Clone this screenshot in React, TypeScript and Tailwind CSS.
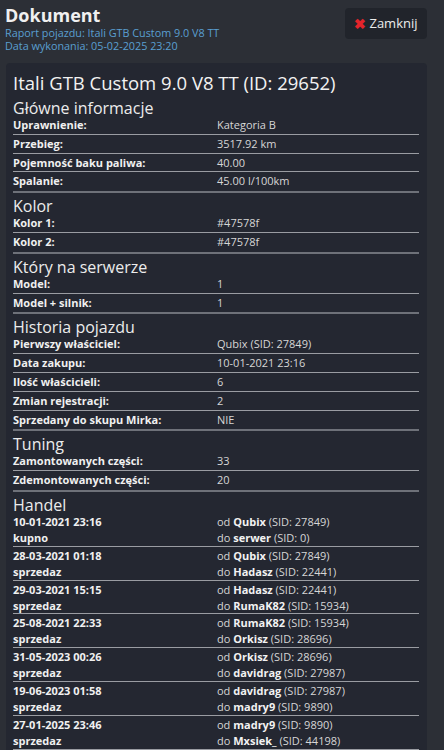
import React from "react";

type Row = [string, string];

const sections: { title: string; rows: Row[] }[] = [
  {
    title: "Główne informacje",
    rows: [
      ["Uprawnienie:", "Kategoria B"],
      ["Przebieg:", "3517.92 km"],
      ["Pojemność baku paliwa:", "40.00"],
      ["Spalanie:", "45.00 l/100km"],
    ],
  },
  {
    title: "Kolor",
    rows: [
      ["Kolor 1:", "#47578f"],
      ["Kolor 2:", "#47578f"],
    ],
  },
  {
    title: "Który na serwerze",
    rows: [
      ["Model:", "1"],
      ["Model + silnik:", "1"],
    ],
  },
  {
    title: "Historia pojazdu",
    rows: [
      ["Pierwszy właściciel:", "Qubix (SID: 27849)"],
      ["Data zakupu:", "10-01-2021 23:16"],
      ["Ilość właścicieli:", "6"],
      ["Zmian rejestracji:", "2"],
      ["Sprzedany do skupu Mirka:", "NIE"],
    ],
  },
  {
    title: "Tuning",
    rows: [
      ["Zamontowanych części:", "33"],
      ["Zdemontowanych części:", "20"],
    ],
  },
];

const trades: [string, string, string, string, string, string][] = [
  ["10-01-2021 23:16", "kupno", "Qubix", "27849", "serwer", "0"],
  ["28-03-2021 01:18", "sprzedaz", "Qubix", "27849", "Hadasz", "22441"],
  ["29-03-2021 15:15", "sprzedaz", "Hadasz", "22441", "RumaK82", "15934"],
  ["25-08-2021 22:33", "sprzedaz", "RumaK82", "15934", "Orkisz", "28696"],
  ["31-05-2023 00:26", "sprzedaz", "Orkisz", "28696", "davidrag", "27987"],
  ["19-06-2023 01:58", "sprzedaz", "davidrag", "27987", "madry9", "9890"],
  ["27-01-2025 23:46", "sprzedaz", "madry9", "9890", "Mxsiek_", "44198"],
];

function Heading({ children }: { children: React.ReactNode }) {
  return (
    <div className="mt-[6px] text-[16px] leading-[15px] text-[#ececec]">{children}</div>
  );
}

export default function App() {
  return (
    <div
      className="min-h-screen w-full bg-[#2c2f36] text-[#e6e6e6]"
      style={{ fontFamily: '"Open Sans", "Noto Sans", sans-serif' }}
    >
      <div className="ml-[5px] w-[422px]">
        <div className="flex items-start justify-between">
          <div className="pt-[5px]">
            <div className="text-[18px] font-bold leading-[21px] text-[#f0f0f0]">Dokument</div>
            <div className="text-[10.8px] leading-[13px] text-[#5a9fd1]">
              Raport pojazdu: Itali GTB Custom 9.0 V8 TT
            </div>
            <div className="text-[10.8px] leading-[13px] text-[#5a9fd1]">
              Data wykonania: 05-02-2025 23:20
            </div>
          </div>
          <button className="mt-[8px] flex h-[31px] w-[82px] items-center justify-center gap-[3px] rounded-[4px] bg-[#21242b] text-[13px] text-[#ececec]">
            <span className="text-[14px] font-bold leading-none text-[#e5242b]">✖</span>
            <span>Zamknij</span>
          </button>
        </div>

        <div className="ml-[1px] mt-[11px] w-[421px] rounded-[4px] bg-[#242731] pb-[10px] pl-[7px] pr-[8px] pt-[7px]">
          <div className="text-[18.5px] leading-[25px] text-[#f2f2f2]">
            Itali GTB Custom 9.0 V8 TT (ID: 29652)
          </div>

          {sections.map((s) => (
            <div key={s.title}>
              <Heading>{s.title}</Heading>
              <div className="border-b-2 border-[#6e7179]">
                {s.rows.map(([k, v], i) => (
                  <div
                    key={k}
                    className={`grid h-[18.8px] grid-cols-[204px_1fr] pt-[1px] text-[11px] leading-[16px] ${
                      i < s.rows.length - 1 ? "border-b border-[#9a9ca2]" : ""
                    }`}
                  >
                    <div className="font-bold text-[#f0f0f0]">{k}</div>
                    <div className="text-[#d6d6d6]">{v}</div>
                  </div>
                ))}
              </div>
            </div>
          ))}

          <Heading>Handel</Heading>
          <div>
            {trades.map(([date, type, from, fromSid, to, toSid]) => (
              <div
                key={date}
                className="grid h-[33.8px] grid-cols-[204px_1fr] border-b border-[#9a9ca2] pt-[1px] text-[11px] leading-[16px]"
              >
                <div className="font-bold text-[#f0f0f0]">
                  <div>{date}</div>
                  <div>{type}</div>
                </div>
                <div className="text-[#d6d6d6]">
                  <div>
                    od <span className="font-bold text-[#f2f2f2]">{from}</span> (SID: {fromSid})
                  </div>
                  <div>
                    do <span className="font-bold text-[#f2f2f2]">{to}</span> (SID: {toSid})
                  </div>
                </div>
              </div>
            ))}
          </div>
        </div>
      </div>
    </div>
  );
}
